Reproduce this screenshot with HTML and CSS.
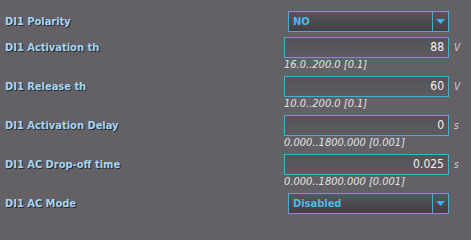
FILE: index.html
```html
<!DOCTYPE html>
<html>
<head>
<meta charset="utf-8">
<link rel="stylesheet" href="styles.css">
</head>
<body>
<div class="form">
  <div class="row">
    <div class="label">DI1 Polarity</div>
    <div class="select">
      <span class="select-value">NO</span>
      <span class="select-btn"><svg width="9" height="5" viewBox="0 0 9 5"><path d="M0 0H9L4.5 5Z" fill="#3cb6e6"/></svg></span>
    </div>
  </div>
  <div class="row">
    <div class="label">DI1 Activation th</div>
    <div class="input-line"><div class="input">88</div><span class="unit">V</span></div>
    <div class="hint">16.0..200.0 [0.1]</div>
  </div>
  <div class="row">
    <div class="label">DI1 Release th</div>
    <div class="input-line"><div class="input">60</div><span class="unit">V</span></div>
    <div class="hint">10.0..200.0 [0.1]</div>
  </div>
  <div class="row">
    <div class="label">DI1 Activation Delay</div>
    <div class="input-line"><div class="input">0</div><span class="unit">s</span></div>
    <div class="hint">0.000..1800.000 [0.001]</div>
  </div>
  <div class="row">
    <div class="label">DI1 AC Drop-off time</div>
    <div class="input-line"><div class="input">0.025</div><span class="unit">s</span></div>
    <div class="hint">0.000..1800.000 [0.001]</div>
  </div>
  <div class="row">
    <div class="label">DI1 AC Mode</div>
    <div class="select">
      <span class="select-value">Disabled</span>
      <span class="select-btn"><svg width="9" height="5" viewBox="0 0 9 5"><path d="M0 0H9L4.5 5Z" fill="#3cb6e6"/></svg></span>
    </div>
  </div>
</div>
</body>
</html>
```
FILE: styles.css
```css
html, body {
  margin: 0;
  padding: 0;
  background: #636166;
  width: 471px;
  height: 218px;
  overflow: hidden;
}
.form {
  padding-top: 11px;
  font-family: "DejaVu Sans Condensed", "DejaVu Sans", sans-serif;
  font-stretch: condensed;
}
.row {
  display: grid;
  grid-template-columns: 279px auto;
  padding-left: 5px;
  margin-bottom: 5px;
}
.label {
  grid-column: 1;
  grid-row: 1;
  align-self: center;
  font-size: 11px;
  font-weight: bold;
  color: #a3d5f2;
  text-shadow: 1px 1px 0 #2b2a2e;
  white-space: nowrap;
}
.select {
  grid-column: 2;
  grid-row: 1;
  margin-left: 4px;
  width: 161px;
  height: 21px;
  box-sizing: border-box;
  border: 1px solid #3cb2da;
  background: linear-gradient(#58565b, #413f44);
  display: flex;
  align-items: stretch;
}
.select-value {
  flex: 1;
  display: flex;
  align-items: center;
  padding-left: 4px;
  font-size: 11px;
  font-weight: bold;
  color: #4cb8e6;
}
.select-btn {
  width: 15px;
  border-left: 1px solid #3cb2da;
  display: flex;
  align-items: center;
  justify-content: center;
}
.input-line {
  grid-column: 2;
  grid-row: 1;
  display: flex;
  align-items: center;
}
.input {
  width: 165px;
  height: 21px;
  box-sizing: border-box;
  border: 1px solid #3cb2da;
  background: linear-gradient(#555358, #5d5b60);
  color: #f2f2f2;
  font-size: 12px;
  text-align: right;
  padding-right: 4px;
  line-height: 19px;
}
.unit {
  margin-left: 5px;
  font-size: 10px;
  font-style: italic;
  color: #d0d0d0;
}
.hint {
  grid-column: 2;
  grid-row: 2;
  height: 13px;
  line-height: 13px;
  font-size: 11px;
  font-style: italic;
  color: #e2e2e2;
  white-space: nowrap;
}
```
